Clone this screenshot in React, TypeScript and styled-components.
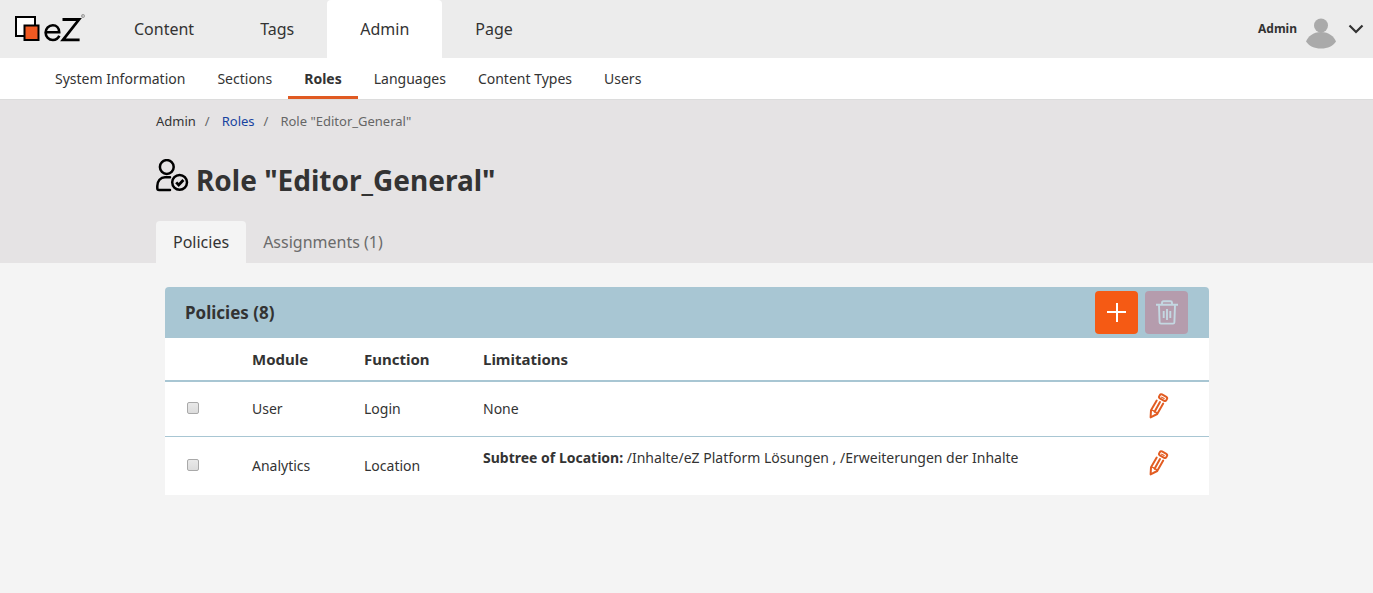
import React from "react";
import styled, { createGlobalStyle } from "styled-components";

const GlobalStyle = createGlobalStyle`
  *, *::before, *::after { box-sizing: border-box; }
  html { background: #f4f4f4; }
  body {
    margin: 0;
    background: #f4f4f4;
    color: #333;
    font: 14px/20px "Noto Sans", "Liberation Sans", sans-serif;
  }
  a { color: inherit; text-decoration: none; }
  svg { display: block; }
`;

const TopBar = styled.header`
  display: flex;
  align-items: center;
  height: 58px;
  background: #ececec;
`;

const LogoLink = styled.a`
  flex: none;
  width: 101px;
  padding-left: 14px;
`;

const MainNav = styled.nav`
  display: flex;
  flex: 1;
  align-self: stretch;
`;

const MainLink = styled.a<{ $active?: boolean }>`
  display: flex;
  align-items: center;
  padding: 0 33px;
  border-radius: 4px 4px 0 0;
  background: ${(p) => (p.$active ? "#fff" : "transparent")};
  font-size: 16px;
  line-height: 24px;
`;

const UserMenu = styled.button`
  display: flex;
  align-items: center;
  padding: 0 9px 0 0;
  border: 0;
  background: none;
  color: #333;
  font: bold 12px/20px "Noto Sans", "Liberation Sans", sans-serif;
`;

const Avatar = styled.svg`
  margin: 8px 12px 0 9px;
`;

const SubNav = styled.nav`
  display: flex;
  height: 41px;
  padding-left: 39px;
  background: #fff;
`;

const SubLink = styled.a<{ $active?: boolean }>`
  padding: 11px 16px 7px;
  border-bottom: 3px solid ${(p) => (p.$active ? "#e05a22" : "transparent")};
  font-weight: ${(p) => (p.$active ? 700 : 400)};
`;

const PageHeader = styled.div`
  padding: 0 156px;
  border-top: 1px solid #dcdcdc;
  background: #e5e3e4;
`;

const Breadcrumb = styled.ol`
  display: flex;
  margin: 0;
  padding: 11px 0 0;
  list-style: none;
  font-size: 13px;
`;

const Crumb = styled.li<{ $color?: string }>`
  color: ${(p) => p.$color || "#333"};

  &:not(:first-child)::before {
    content: "/";
    padding: 0 12px 0 9px;
    color: #666;
  }
`;

const TitleRow = styled.div`
  display: flex;
  align-items: flex-start;
  gap: 7px;
  padding: 28px 0 21px;
`;

const Title = styled.h1`
  margin: 0;
  padding-top: 1px;
  font-size: 28px;
  line-height: 40px;
`;

const Tabs = styled.div`
  display: flex;
`;

const Tab = styled.button<{ $active?: boolean }>`
  height: 42px;
  padding: 0 17px;
  border: 0;
  border-radius: 4px 4px 0 0;
  background: ${(p) => (p.$active ? "#f4f4f4" : "transparent")};
  color: ${(p) => (p.$active ? "#333" : "#6b6b6b")};
  font: 16px/24px "Noto Sans", "Liberation Sans", sans-serif;
`;

const Content = styled.main`
  padding: 24px 164px 24px 165px;
`;

const CardHeader = styled.div`
  display: flex;
  align-items: center;
  gap: 7px;
  height: 51px;
  padding: 0 21px 0 20px;
  border-radius: 4px 4px 0 0;
  background: #a8c6d3;
`;

const CardTitle = styled.h2`
  flex: 1;
  margin: 0;
  font-size: 17px;
  line-height: 24px;
`;

const IconButton = styled.button<{ $color: string }>`
  display: flex;
  align-items: center;
  justify-content: center;
  width: 43px;
  height: 43px;
  padding: 0;
  border: 0;
  border-radius: 4px;
  background: ${(p) => p.$color};
`;

const Table = styled.table`
  width: 100%;
  border-collapse: separate;
  border-spacing: 0;
  background: #fff;
  table-layout: fixed;
`;

const HeadCell = styled.th<{ $width?: number }>`
  width: ${(p) => (p.$width ? `${p.$width}px` : "auto")};
  height: 44px;
  padding: 0;
  border-bottom: 2px solid #a8c6d3;
  font-size: 15px;
  text-align: left;
`;

const Row = styled.tr`
  height: 58px;

  &:not(:last-child) { height: 55px; }
  &:not(:last-child) > td { border-bottom: 1px solid #a8c6d3; }
`;

const Cell = styled.td`
  padding: 0;
`;

const LimitCell = styled(Cell)`
  &:has(strong) { padding-bottom: 16px; }
`;

const CheckCell = styled(Cell)`
  padding-left: 22px;
`;

const Checkbox = styled.input`
  display: block;
  appearance: none;
  width: 12px;
  height: 12px;
  margin: 0 0 2px;
  border: 1px solid #a9a9a9;
  border-radius: 2px;
  background: linear-gradient(#e9e9e9, #dcdcdc);

  &:checked { background: #e05a22; }
`;

const EditButton = styled.button`
  display: block;
  margin-bottom: 6px;
  padding: 0;
  border: 0;
  background: none;
`;

function Logo() {
  return (
    <svg width="72" height="32" viewBox="14 13 72 32" fill="none" aria-hidden="true">
      <rect x="16" y="17" width="19" height="19" fill="#fff" stroke="#000" strokeWidth="2" />
      <rect x="24.5" y="25.5" width="14" height="14.5" fill="#f15a22" stroke="#000" strokeWidth="2" />
      <path d="M46 32.2H59.2C59.2 28 56.4 25.2 52.8 25.2C48.8 25.2 45.6 28.4 45.6 32.6C45.6 36.8 48.8 40 52.9 40C55.8 40 58.2 38.4 59.3 35.8" stroke="#000" strokeWidth="2.6" />
      <path d="M62.5 19.5H79L63 39.8H79.6" stroke="#000" strokeWidth="2.8" />
      <circle cx="83" cy="16" r="1.6" stroke="#888" strokeWidth=".7" />
      <path d="M82.5 17V15.2H83.3V16H82.7L83.5 17" stroke="#888" strokeWidth=".4" />
    </svg>
  );
}

function RoleIcon() {
  return (
    <svg width="33" height="33" viewBox="156 159 33 33" fill="none" stroke="#000" strokeWidth="2.5" aria-hidden="true">
      <circle cx="166.8" cy="167" r="6.9" />
      <path d="M170 177.2H165C160.5 177.2 157.3 181 157.3 186V188.2Q157.3 190 159.1 190H170" strokeLinecap="round" />
      <circle cx="179.6" cy="182.3" r="7.4" />
      <path d="M176.2 182.4L178.7 185L183.4 180" strokeWidth="2.8" />
    </svg>
  );
}

function TrashIcon() {
  return (
    <svg width="22" height="26" viewBox="0 0 22 26" fill="none" stroke="#c4d8e2" strokeWidth="1.9" aria-hidden="true">
      <path d="M0 4.7H22M6 4.2V2.7Q6 1.2 7.5 1.2H14.5Q16 1.2 16 2.7V4.2" />
      <path d="M3 5.2L3.6 22.2Q3.7 23.6 5 23.6H17Q18.3 23.6 18.4 22.2L19 5.2" />
      <path d="M7.7 11V18M11 9V20M14.3 11V18" />
    </svg>
  );
}

function PencilIcon() {
  return (
    <svg width="20" height="26" viewBox="0 0 20 26" fill="none" stroke="#e25c22" strokeWidth="2" strokeLinejoin="round" strokeLinecap="round" aria-hidden="true">
      <path d="M7.7 7.6L2 17.2L1.6 24.4L8.2 21L14.2 10.6" />
      <path d="M11 9L5.7 18.4" />
      <path d="M2.2 17.6Q4.8 16.9 5.5 19Q7.6 18.8 8 20.9" strokeWidth="1.3" />
      <rect x="-4" y="-2.4" width="8" height="4.4" rx="1.5" transform="translate(14 4.8) rotate(29)" />
      <path d="M12.6 4.2L15.2 5.6" strokeWidth="1.1" />
    </svg>
  );
}

const mainItems = ["Content", "Tags", "Admin", "Page"];
const subItems = ["System Information", "Sections", "Roles", "Languages", "Content Types", "Users"];

const policies: { module: string; fn: string; limit: React.ReactNode }[] = [
  { module: "User", fn: "Login", limit: "None" },
  {
    module: "Analytics",
    fn: "Location",
    limit: (
      <>
        <strong>Subtree of Location:</strong> /Inhalte/eZ Platform Lösungen , /Erweiterungen der Inhalte
      </>
    ),
  },
];

export default function App() {
  return (
    <>
      <GlobalStyle />
      <TopBar>
        <LogoLink href="#" aria-label="eZ">
          <Logo />
        </LogoLink>
        <MainNav>
          {mainItems.map((t) => (
            <MainLink key={t} href="#" $active={t === "Admin"}>{t}</MainLink>
          ))}
        </MainNav>
        <UserMenu type="button">
          Admin
          <Avatar width="30" height="31" viewBox="0 0 30 31" fill="#aaa" aria-hidden="true">
            <circle cx="15" cy="7.5" r="7" />
            <path d="M15 14C23 14 28 18.5 30 23.5C27 28 22 30.5 15 30.5S3 28 0 23.5C2 18.5 7 14 15 14Z" />
          </Avatar>
          <svg width="16" height="10" viewBox="0 0 16 10" fill="none" stroke="#333" strokeWidth="2.2" aria-hidden="true">
            <path d="M1.5 1.5L8 8L14.5 1.5" />
          </svg>
        </UserMenu>
      </TopBar>
      <SubNav>
        {subItems.map((t) => (
          <SubLink key={t} href="#" $active={t === "Roles"}>{t}</SubLink>
        ))}
      </SubNav>
      <PageHeader>
        <Breadcrumb>
          <Crumb>Admin</Crumb>
          <Crumb $color="#1843a0"><a href="#">Roles</a></Crumb>
          <Crumb $color="#666">Role "Editor_General"</Crumb>
        </Breadcrumb>
        <TitleRow>
          <RoleIcon />
          <Title>Role "Editor_General"</Title>
        </TitleRow>
        <Tabs role="tablist">
          <Tab type="button" role="tab" aria-selected="true" $active>Policies</Tab>
          <Tab type="button" role="tab" aria-selected="false">Assignments (1)</Tab>
        </Tabs>
      </PageHeader>
      <Content>
        <CardHeader>
          <CardTitle>Policies (8)</CardTitle>
          <IconButton type="button" $color="#f55a14" aria-label="Add policy">
            <svg width="19" height="19" viewBox="0 0 19 19" stroke="#fff" strokeWidth="2" aria-hidden="true">
              <path d="M0 9H19M10 0V19" />
            </svg>
          </IconButton>
          <IconButton type="button" $color="#b59cad" aria-label="Delete policies" disabled>
            <TrashIcon />
          </IconButton>
        </CardHeader>
        <Table>
          <thead>
            <tr>
              <HeadCell $width={87} />
              <HeadCell $width={112} scope="col">Module</HeadCell>
              <HeadCell $width={119} scope="col">Function</HeadCell>
              <HeadCell scope="col">Limitations</HeadCell>
              <HeadCell $width={60} />
            </tr>
          </thead>
          <tbody>
            {policies.map((p) => (
              <Row key={p.module}>
                <CheckCell>
                  <Checkbox type="checkbox" aria-label={`Select ${p.module}`} />
                </CheckCell>
                <Cell>{p.module}</Cell>
                <Cell>{p.fn}</Cell>
                <LimitCell>{p.limit}</LimitCell>
                <Cell>
                  <EditButton type="button" aria-label={`Edit ${p.module}`}>
                    <PencilIcon />
                  </EditButton>
                </Cell>
              </Row>
            ))}
          </tbody>
        </Table>
      </Content>
    </>
  );
}
